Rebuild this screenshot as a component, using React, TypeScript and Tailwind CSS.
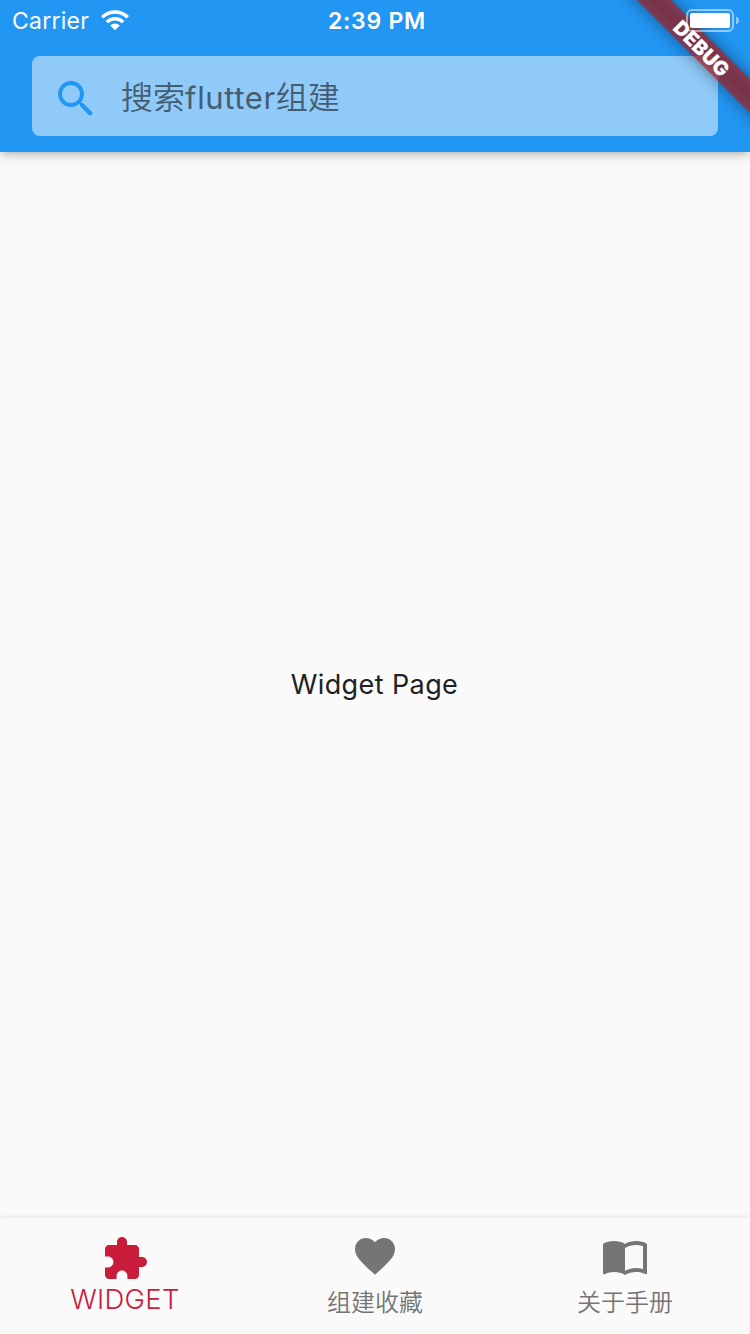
import type { ReactNode } from 'react';

const FONT = "font-['Inter','Noto_Sans_CJK_SC',sans-serif]";

function Icon({ d, className }: { d: string; className: string }) {
  return (
    <svg viewBox="0 0 24 24" className={`size-12 shrink-0 fill-current ${className}`}>
      <path d={d} />
    </svg>
  );
}

const ICONS = {
  search:
    'M15.5 14h-.79l-.28-.27C15.41 12.59 16 11.11 16 9.5 16 5.91 13.09 3 9.5 3S3 5.91 3 9.5 5.91 16 9.5 16c1.61 0 3.09-.59 4.23-1.57l.27.28v.79l5 4.99L20.49 19l-4.99-5zm-6 0C7.01 14 5 11.99 5 9.5S7.01 5 9.5 5 14 7.01 14 9.5 11.99 14 9.5 14z',
  extension:
    'M20.5 11H19V7c0-1.1-.9-2-2-2h-4V3.5C13 2.12 11.88 1 10.5 1S8 2.12 8 3.5V5H4c-1.1 0-1.99.9-1.99 2v3.8H3.5c1.49 0 2.7 1.21 2.7 2.7s-1.21 2.7-2.7 2.7H2V20c0 1.1.9 2 2 2h3.8v-1.5c0-1.49 1.21-2.7 2.7-2.7 1.49 0 2.7 1.21 2.7 2.7V22H17c1.1 0 2-.9 2-2v-4h1.5c1.38 0 2.5-1.12 2.5-2.5S21.88 11 20.5 11z',
  favorite:
    'M12 21.35l-1.45-1.32C5.4 15.36 2 12.28 2 8.5 2 5.42 4.42 3 7.5 3c1.74 0 3.41.81 4.5 2.09C13.09 3.81 14.76 3 16.5 3 19.58 3 22 5.42 22 8.5c0 3.78-3.4 6.86-8.55 11.54L12 21.35z',
  book:
    'M21 5c-1.11-.35-2.33-.5-3.5-.5-1.95 0-4.05.4-5.5 1.5-1.45-1.1-3.55-1.5-5.5-1.5S2.45 4.9 1 6v14.65c0 .25.25.5.5.5.1 0 .15-.05.25-.05C3.1 20.45 5.05 20 6.5 20c1.95 0 4.05.4 5.5 1.5 1.35-.85 3.8-1.5 5.5-1.5 1.65 0 3.35.3 4.75 1.05.1.05.15.05.25.05.25 0 .5-.25.5-.5V6c-.6-.45-1.25-.75-2-1zm0 13.5c-1.1-.35-2.3-.5-3.5-.5-1.7 0-4.15.65-5.5 1.5V8c1.35-.85 3.8-1.5 5.5-1.5 1.2 0 2.4.15 3.5.5v11.5z',
};

function StatusBar() {
  return (
    <div className="grid h-10 grid-cols-3 items-center pr-[11px] pl-3 text-white">
      <div className="flex items-center gap-3">
        <span className="pt-0.5 text-[23px] leading-[38px] tracking-[0.25px]">Carrier</span>
        <svg viewBox="0 0 28 21" className="h-[21px] w-7 fill-none stroke-current">
          <path d="M1.2 7.3a18.2 18.2 0 0 1 25.6 0" strokeWidth="3.6" />
          <path d="M5.8 12.1a11.6 11.6 0 0 1 16.4 0" strokeWidth="3.4" />
          <path d="M9.1 15.5a7 7 0 0 1 9.800 0L14 20.3z" className="fill-current stroke-none" />
        </svg>
      </div>
      <span className="ml-[3px] pt-0.5 text-center text-[23px] leading-[38px] font-semibold tracking-[0.75px]">2:39 PM</span>
      <div className="relative z-20 flex justify-end">
        <svg viewBox="0 0 53 23" className="h-[23px] w-[53px]">
          <rect x="1" y="1" width="46" height="21" rx="5" fill="none" stroke="white" strokeOpacity="0.5" strokeWidth="2" />
          <rect x="4" y="4" width="40" height="15" rx="2" fill="white" />
          <path d="M50 7.5c2 .7 3 2.2 3 4s-1 3.300-3 4z" fill="white" fillOpacity="0.5" />
        </svg>
      </div>
    </div>
  );
}

function DebugBanner() {
  return (
    <div className="pointer-events-none absolute top-0 right-0 z-10 size-40 overflow-hidden">
      <div className="absolute top-[36px] left-[-48px] h-6 w-80 rotate-45 bg-black/45 blur-[8px]" />
      <div className="absolute top-[36px] left-[-48px] flex h-6 w-80 rotate-45 items-center justify-center bg-[#b71c1c]/[0.627]">
        <span className="mt-px text-[20px] leading-6 font-black text-white">DEBUG</span>
      </div>
    </div>
  );
}

function Tab({ color, children }: { color: string; children: ReactNode }) {
  return <button className={`flex flex-1 flex-col items-center ${color}`}>{children}</button>;
}

export default function App() {
  return (
    <div className={`relative flex h-[1334px] w-[750px] flex-col overflow-hidden bg-[#fafafa] ${FONT}`}>
      <header className="h-[152px] bg-[#2196f3] shadow-[0_4px_6px_-2px_rgba(0,0,0,0.12),0_3px_12px_rgba(0,0,0,0.18)]">
        <StatusBar />
        <div className="mt-4 mr-8 ml-8 flex h-20 items-center rounded-lg bg-[#90caf9] pl-5">
          <Icon d={ICONS.search} className="mt-[5px] text-[#2196f3]" />
          <span className="mt-[3px] ml-[21px] text-[32px] leading-10 font-[350] text-[#455d70]">
            搜索<span className="text-[31px] font-normal tracking-[0.65px]">flutter</span>组建
          </span>
        </div>
      </header>
      <DebugBanner />
      <main className="flex flex-1 items-center justify-center pr-px text-[27px] tracking-[0.4px] text-[#212121]">
        Widget Page
      </main>
      <nav className="flex h-[116px] bg-[#fafafa] shadow-[0_-1px_6px_rgba(0,0,0,0.1)]">
        <Tab color="text-[#c91b3a]">
          <Icon d={ICONS.extension} className="mt-[17px]" />
          <span className="text-[27.5px] leading-8 font-[350] tracking-[0.3px]">WIDGET</span>
        </Tab>
        <Tab color="text-[#757575]">
          <Icon d={ICONS.favorite} className="mt-[14px]" />
          <span className="mt-[7px] text-[24px] leading-8 font-[350]">组建收藏</span>
        </Tab>
        <Tab color="text-[#757575]">
          <Icon d={ICONS.book} className="mt-[14px]" />
          <span className="mt-[7px] text-[24px] leading-8 font-[350]">关于手册</span>
        </Tab>
      </nav>
    </div>
  );
}
